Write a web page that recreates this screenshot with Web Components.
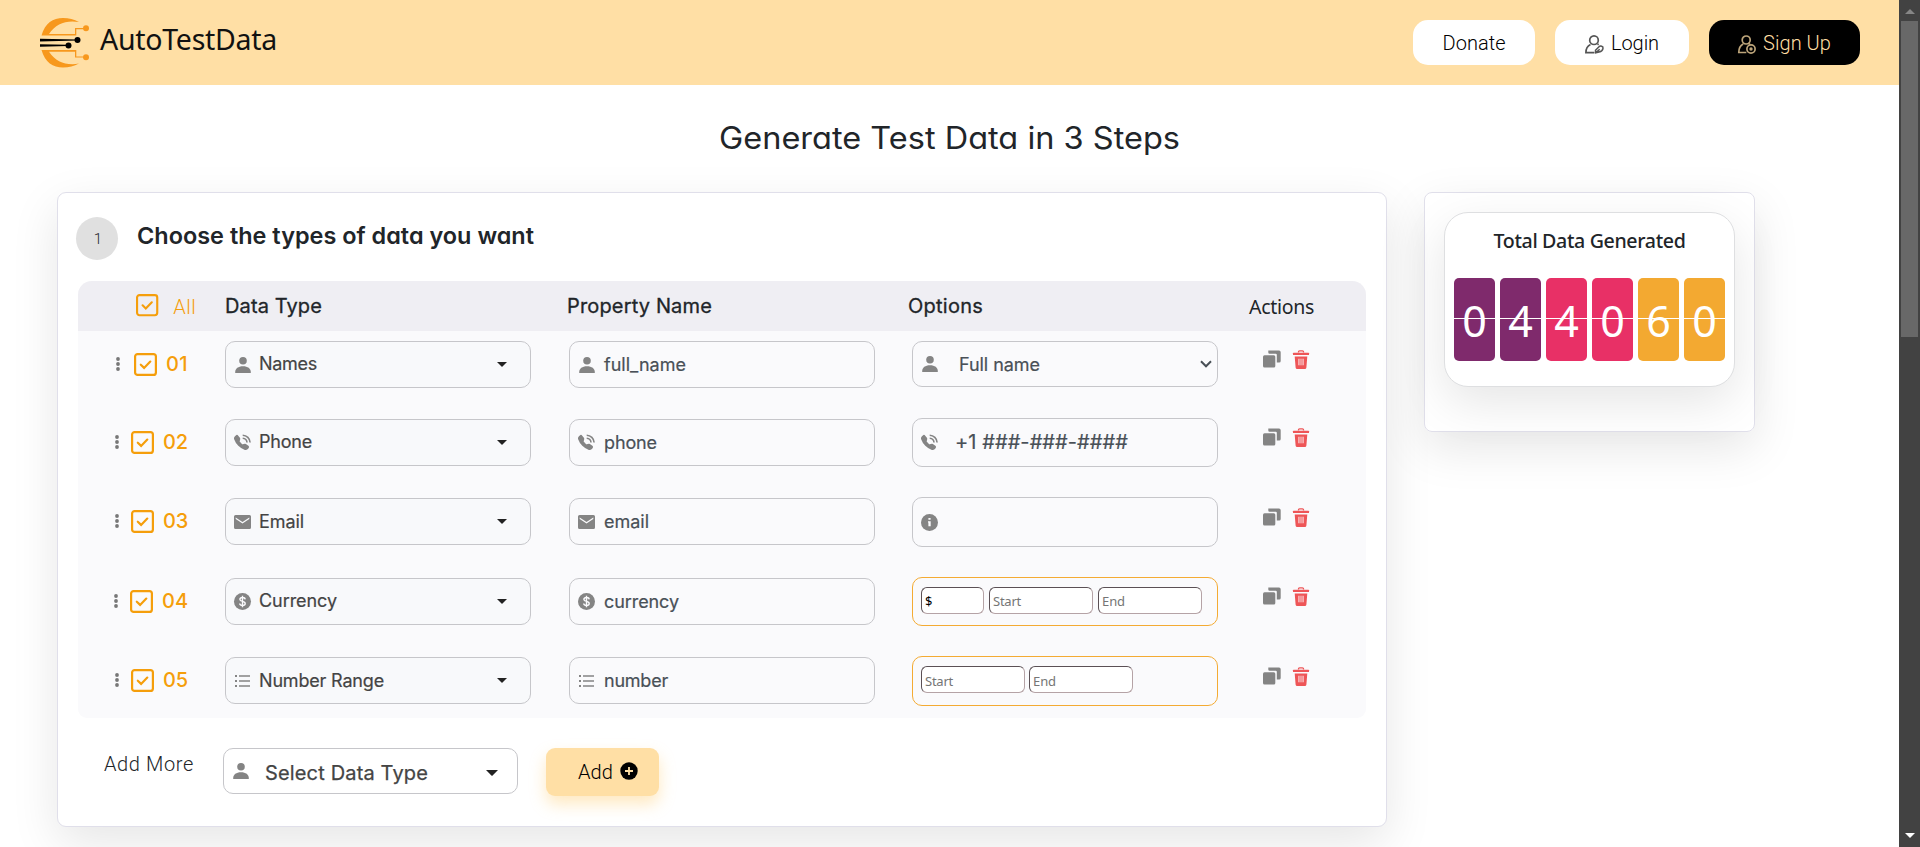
<!DOCTYPE html>
<html lang="en">
<head>
<meta charset="utf-8">
<title>AutoTestData</title>
<style>
html,body{margin:0;height:847px;overflow:hidden;background:#fff}
body{font-family:Inter,sans-serif;color:#212529}
</style>
</head>
<body>
<app-page></app-page>
<script>
const define = (name, html, setup) => customElements.define(name, class extends HTMLElement {
  connectedCallback() {
    if (this.shadowRoot) return;
    const root = this.attachShadow({mode: 'open'});
    const a = (k, d = '') => this.hasAttribute(k) ? this.getAttribute(k) : d;
    root.innerHTML = typeof html === 'function' ? html(a) : html;
    if (setup) setup.call(this, root, a);
  }
});

/* Icon set: [width, height, markup] */
const ICONS = {
  person: [16,16,'<circle cx="8" cy="3.8" r="3.8"/><path d="M.2 16v-1c0-3.4 3-5.700 7.800-5.700s7.800 2.300 7.800 5.700v1z"/>'],
  phone: [17,17,'<path transform="translate(0 1) scale(.94)" d="M1.885.511a1.745 1.745 0 0 1 2.61.163L6.29 2.98c.329.423.445.974.315 1.494l-.547 2.19a.68.68 0 0 0 .178.643l2.457 2.457a.68.68 0 0 0 .644.178l2.189-.547a1.75 1.75 0 0 1 1.494.315l2.306 1.794c.829.645.905 1.87.163 2.611l-1.034 1.034c-.74.74-1.846 1.065-2.877.702a18.6 18.6 0 0 1-7.01-4.42 18.6 18.6 0 0 1-4.42-7.009c-.362-1.03-.037-2.137.703-2.877z"/><path d="M8.7 4.2a4.6 4.6 0 0 1 4.3 4.3M8.7 1.2a7.6 7.6 0 0 1 7.4 7.3" fill="none" stroke="currentColor" stroke-width="1.6"/>'],
  mail: [17,14,'<path fill-rule="evenodd" d="M1.5 0h14Q17 0 17 1.5v11q0 1.500-1.500 1.500h-14Q0 14 0 12.500v-11Q0 0 1.500 0zM1.700 2.400v1.700L8.500 8.600l6.800-4.500V2.400L8.500 6.900z"/>'],
  dollar: [17,17,'<circle cx="8.5" cy="8.5" r="8.5"/><path d="M11.200 6.300C11 4.900 9.900 4.500 8.500 4.500S5.900 5.200 5.900 6.400c0 2.700 5.300 1.300 5.300 4.100 0 1.300-1.200 2-2.700 2s-2.600-.6-2.800-2M8.500 2.800v11.400" fill="none" stroke="#fafafc" stroke-width="1.400"/>'],
  list: [15,12,'<path d="M0 0h2v2H0zM4 .3h11v1.500H4zM0 5h2v2H0zM4 5.200h11v1.500H4zM0 10h2v2H0zM4 10.200h11v1.500H4z"/>'],
  info: [17,17,'<circle cx="8.5" cy="8.5" r="8.500"/><path d="M7.400 3.900h2.200v1.900H7.400zM7 7.200h2.700v5H7.400V8.500H7z" fill="#fafafc"/>'],
  copy: [18,18,'<rect y="5.300" width="12.300" height="12.200" rx="1.500"/><path d="M5.300 .5H16q1.700 0 1.700 1.700V11q0 1.600-1.600 1.600h-2.300V4.800q0-1-1-1H6.500q-1.200 0-1.200-1.200z"/>'],
  trash: [16,19,'<path d="M5.500 2.600V1.800q0-1 1-1h3q1 0 1 1v.8" fill="none" stroke="currentColor" stroke-width="1.300"/><rect y="2.700" width="16" height="2.400" rx=".5"/><path d="M1.700 6.500h12.600l-.9 11q-.1 1.500-1.600 1.500H4.200q-1.500 0-1.600-1.500z"/><path d="M5 8.800h6v6.400H5z" fill="#f7aeb0"/><path d="M7 8.800v6.400M9 8.800v6.400" stroke="#ee6a6d" stroke-width=".6"/>'],
  login: [19,19,'<g fill="none" stroke="currentColor" stroke-width="1.700"><circle cx="9" cy="5.200" r="4.300"/><path d="M5.500 9.500C2.300 11 .9 13.500.9 17.700h8.600M12.500 9l1.200.7"/><path d="M10.700 17.900l-.2-2.600 3.500-3.600c1.300-1.200 4.500-.7 4 1.700-.2 1.700-2.400 3.300-4 3.700zM10.700 17.900l4-3.700" stroke-width="1.500"/></g>'],
  signup: [18,19,'<g fill="none" stroke="currentColor" stroke-width="1.700"><circle cx="8.200" cy="5" r="4"/><path d="M5.200 9C2.200 10.500.8 13 .8 17.500h7.500M10.800 8.700l1.300.5"/><circle cx="13" cy="14" r="4.100"/></g><circle cx="13" cy="14" r="1.700"/>'],
  plus: [18,18,'<circle cx="9" cy="9" r="8.700"/><path d="M9 5v8M5 9h8" stroke="#ffdfa5" stroke-width="1.800"/>'],
  check: [23,23,'<rect x="1.100" y="1.100" width="20.800" height="20.800" rx="2.500" fill="none" stroke="currentColor" stroke-width="2.200"/><path d="M6.800 11.700l3.300 3.200 6.200-6.300" fill="none" stroke="currentColor" stroke-width="2.200" stroke-linecap="round"/>'],
  dots: [4,14,'<circle cx="2" cy="2" r="1.900"/><circle cx="2" cy="7" r="1.900"/><circle cx="2" cy="12" r="1.900"/>'],
  caret: [10,5,'<path d="M0 0h10L5.500 4.600q-.5.400-1 0z"/>'],
  chevron: [12,8,'<path d="M1 1.300l5 5 5-5" fill="none" stroke="currentColor" stroke-width="2"/>'],
  logo: [50,50,'<g fill="#f7981d"><path d="M1.500 17.500C5 5 13 0 23 0c6 0 11 1.500 16 4C26 2 16 5.500 9 15.900h26V10h8.500v1.200H36.300v6.300z"/><circle cx="46" cy="10.300" r="3"/><path d="M1.500 32.100C5 44.600 13 49.600 23 49.600c6 0 11-1.500 16-4C26 47.600 16 44.100 9 33.700h26v5.900h8.500v-1.200H36.300v-6.300z"/><circle cx="46" cy="39.300" r="3"/></g><path d="M0 20.800l38 .6v1.200l-38 .9zM0 26.200l28 .6v1.300l-28 .6z"/><circle cx="37.500" cy="22" r="3"/><circle cx="28.500" cy="27.500" r="3"/>']
};
define('ui-icon', a => {
  const [w, h, body] = ICONS[a('name')];
  const s = +a('scale', 1);
  return `<style>:host{display:block;flex:none}svg{display:block;overflow:visible}</style>
  <svg width="${w*s}" height="${h*s}" viewBox="0 0 ${w} ${h}" fill="currentColor">${body}</svg>`;
});

/* Single line of text that spans the given width, by tracking or, with "stretch", by scaling */
define('fit-text', '<style>:host{display:block;flex:none;white-space:nowrap}span{display:inline-block;transform-origin:0 50%}</style><span><slot></slot></span>',
  function (root, a) {
    const span = root.querySelector('span'), w = +a('w');
    const n = this.textContent.length;
    const natural = span.getBoundingClientRect().width;
    if (!w || !natural) return;
    if (this.hasAttribute('stretch')) span.style.transform = `scaleX(${w / natural})`;
    else span.style.letterSpacing = (w - natural) / n + 'px';
    this.style.width = w + 'px';
  });

define('pill-button', a => `<style>
  :host{display:flex;align-items:center;justify-content:center;height:45px;border-radius:15px;background:#fff;color:#000;
    font:300 20px/24px Roboto,sans-serif;gap:7px;box-sizing:border-box}
  :host([dark]){background:#000;color:#ffdfa5}
  ui-icon{color:#555;margin-top:3px}:host([dark]) ui-icon{color:#bda57a}
  fit-text{padding-top:1px}
  </style>${a('icon') ? `<ui-icon name="${a('icon')}"></ui-icon>` : ''}<fit-text w="${a('w')}">${a('label')}</fit-text>`);

define('site-header', `<style>
  :host{display:flex;height:85px;background:#ffdfa5;align-items:flex-start;justify-content:space-between;padding:0 39px 0 40px;box-sizing:border-box}
  .brand{display:flex;gap:10px;padding-top:18px;color:#000}
  .brand fit-text{font:400 28.5px/40px "Noto Sans",sans-serif;color:#111;margin-top:1px}
  nav{display:flex;gap:20px;padding-top:20px}
  </style>
  <div class="brand"><ui-icon name="logo"></ui-icon><fit-text w="177">AutoTestData</fit-text></div>
  <nav><pill-button style="width:122px" label="Donate" w="63"></pill-button>
  <pill-button style="width:134px" label="Login" icon="login" w="48"></pill-button>
  <pill-button dark style="width:151px" label="Sign Up" icon="signup" w="68"></pill-button></nav>`);

define('form-field', a => `<style>
  :host{display:flex;align-items:center;width:306px;height:47px;box-sizing:border-box;border:1px solid #c6c6ca;border-radius:10px;
    padding:0 9px 0 8px;color:#495057;font:400 18px/24px Inter,sans-serif;-webkit-text-stroke:.2px currentColor}
  :host([type=select]){background:#f8f9fb;color:#444}
  .ic{flex:none;width:17px;margin-right:${a('gap', '8')}px;display:grid;place-items:center;color:#848484}
  .end{margin-left:auto}
  </style><div class="ic"><ui-icon name="${a('icon')}"></ui-icon></div>
  ${a('label') ? `<fit-text w="${a('w')}" style="position:relative;top:${a('dy', '0')}px">${a('label')}</fit-text>` : ''}
  ${a('type') === 'select' ? '<ui-icon class="end" name="caret" style="margin-right:14px;color:#222;margin-bottom:1px"></ui-icon>' : ''}
  ${a('type') === 'native' ? '<ui-icon class="end" name="chevron" style="margin-right:-4px"></ui-icon>' : ''}`);

define('range-box', `<style>
  :host{display:flex;width:306px;box-sizing:border-box;border:1px solid #f4ab33;border-radius:10px;padding:9px 8px;gap:5px}
  </style><slot></slot>`);
define('mini-input', a => `<style>
  :host{display:block;box-sizing:border-box;width:104px;height:27px;background:#fff;border:1px solid;border-color:#5b5055 #b5a3a6 #b5a3a6 #5b5055;
    border-radius:6px;padding-left:3px;color:#757575;font:400 13px/${a('lh', '26')}px "Noto Sans",sans-serif}
  </style><fit-text w="${a('w')}">${a('label')}</fit-text>`);

define('data-row', a => `<style>
  :host{display:grid;grid-template-columns:147px 344px 343px 351px auto;align-items:start;padding-top:10px;box-sizing:border-box}
  .lead{display:flex;height:46px;width:110px;align-items:center;justify-content:flex-end;color:#f59e0b;font:500 20px/24px Inter,sans-serif}
  .lead .d{color:#777;margin-right:${a('dotgap', '12')}px}
  .opt{margin-top:${a('oy', '-1')}px}
  .act{display:flex;gap:12px;padding-top:${a('ay', '9')}px;color:#848484}
  .act .t{color:#ee5557}
  </style>
  <div class="lead"><ui-icon class="d" name="dots"></ui-icon><ui-icon name="check" style="margin-right:${a('numgap', '9')}px"></ui-icon><fit-text w="${a('nw', '26')}">${a('no')}</fit-text></div>
  <form-field type="select" icon="${a('icon')}" label="${a('label')}" w="${a('w')}" dy="${a('dy', '-1')}"></form-field>
  <form-field icon="${a('icon')}" gap="9" label="${a('prop')}" w="${a('pw')}"></form-field>
  <div class="opt"><slot></slot></div>
  <div class="act"><ui-icon name="copy"></ui-icon><ui-icon class="t" name="trash"></ui-icon></div>`);

define('data-table', `<style>
  :host{display:block;width:1288px;background:#fafafc;border-radius:14px 14px 9px 9px;overflow:hidden;height:437px}
  header{display:grid;grid-template-columns:147px 342px 341px 341px auto;height:50px;background:#efeef3;align-items:center;font:400 20px/24px Inter,sans-serif}
  header>fit-text{-webkit-text-stroke:.3px currentColor}
  .all{display:flex;padding-left:58px;align-items:center;color:#f59e0b;font:300 20px/24px Roboto,sans-serif;white-space:nowrap;width:89px}
  .all fit-text{margin-left:15px;padding-top:1px}
  header>.act{font:400 19.500px/24px "Noto Sans",sans-serif;padding-top:2px;-webkit-text-stroke:0}
  </style>
  <header><div class="all"><ui-icon name="check" scale=".97" style="margin-top:-1px"></ui-icon><fit-text w="23">All</fit-text></div>
  <fit-text w="97">Data Type</fit-text><fit-text w="145">Property Name</fit-text><fit-text w="75">Options</fit-text>
  <fit-text class="act" w="65">Actions</fit-text></header>
  <data-row style="height:78px" no="01" nw="22" icon="person" label="Names" w="58" prop="full_name" pw="82" oy="0" dotgap="14">
    <form-field type="native" icon="person" gap="21" dy="1" label="Full name" w="81" style="height:46px"></form-field></data-row>
  <data-row style="height:79px" no="02" nw="25" icon="phone" label="Phone" w="53" prop="phone" pw="53">
    <form-field icon="phone" gap="17" label="+1 ###-###-####" w="173" dy="-1" style="height:49px;font-size:20px"></form-field></data-row>
  <data-row style="height:80px" no="03" nw="25" icon="mail" label="Email" w="45" prop="email" pw="45" dy="0" ay="10">
    <form-field icon="info" style="height:50px"></form-field></data-row>
  <data-row style="height:79px" no="04" nw="26" icon="dollar" label="Currency" w="78" prop="currency" pw="75">
    <range-box style="height:49px"><mini-input style="width:63px;color:#000" label="$" w="7"></mini-input>
    <mini-input label="Start" w="28"></mini-input><mini-input label="End" w="23"></mini-input></range-box></data-row>
  <data-row style="height:71px" no="05" nw="25" icon="list" label="Number Range" w="125" prop="number" pw="64" dy="0" ay="10">
    <range-box style="height:50px;gap:4px"><mini-input label="Start" w="28" lh="28"></mini-input><mini-input label="End" w="23" lh="28"></mini-input></range-box></data-row>`);

define('step-card', `<style>
  :host{display:block;width:1330px;height:635px;box-sizing:border-box;border:1px solid #e0dfea;border-radius:9px;background:#fff;
    box-shadow:0 16px 48px rgba(0,0,0,.1);padding:24px 17px 0 18px}
  .head{display:flex;gap:19px;height:64px}
  .no{width:42px;height:43px;border-radius:50%;background:#e0e0e0;display:grid;place-items:center;font:300 15px/20px Roboto,sans-serif;padding-left:2px;box-sizing:border-box}
  h2{margin:3px 0 0;font:600 23.500px/32px Inter,sans-serif;font-feature-settings:"cv11"}
  data-table{margin-left:2px}
  .add{display:flex;padding:30px 0 0 28px;align-items:flex-start;font:300 20px/24px Roboto,sans-serif}
  .btn{display:flex;align-items:center;width:113px;height:48px;box-sizing:border-box;margin-left:28px;padding-left:32px;gap:7px;border-radius:9px;background:#ffdfa5;color:#000;box-shadow:0 8px 16px rgba(255,200,100,.4)}
  .sel{display:flex;align-items:center;width:295px;height:46px;box-sizing:border-box;margin-left:29px;border:1px solid #c6c6ca;border-radius:10px;padding:0 19px 0 9px;color:#444;font:400 20px/24px Inter,sans-serif;-webkit-text-stroke:.25px currentColor}
  </style>
  <div class="head"><div class="no">1</div><h2><fit-text stretch w="397">Choose the types of data you want</fit-text></h2></div>
  <data-table></data-table>
  <div class="add"><fit-text w="90" style="margin-top:4px">Add More</fit-text>
  <div class="sel"><ui-icon name="person" style="color:#848484"></ui-icon><fit-text w="163" style="margin:3px 0 0 16px">Select Data Type</fit-text><ui-icon name="caret" scale="1.200" style="margin:4px 0 0 auto;color:#222"></ui-icon></div>
  <div class="btn"><fit-text w="35">Add</fit-text><ui-icon name="plus" style="margin-top:-3px"></ui-icon></div></div>`);

define('flip-digit', `<style>
  :host{display:flex;justify-content:center;width:41px;height:83px;border-radius:5px;color:#fff;position:relative;
    font:400 43px/83px "Noto Sans",sans-serif;box-sizing:border-box;padding-top:1px}
  i{position:absolute;left:0;right:0;top:40px;height:1px;background:#fff}
  </style><slot></slot><i></i>`);

define('counter-card', `<style>
  :host{display:block;width:331px;height:240px;box-sizing:border-box;border:1px solid #e0dfea;border-radius:8px;padding:19px;
    box-shadow:0 16px 48px rgba(0,0,0,.1)}
  .in{width:291px;height:175px;box-sizing:border-box;border:1px solid #dedfe1;border-radius:24px;background:#fff;box-shadow:0 16px 48px rgba(0,0,0,.1);
    padding:14px 9px 0;display:flex;flex-direction:column;align-items:center}
  fit-text{font:500 19.600px/28px "Noto Sans",sans-serif}
  .digits{display:flex;gap:5px;margin-top:23px}
  </style><div class="in"><fit-text w="192">Total Data Generated</fit-text>
  <div class="digits">
  <flip-digit style="background:#7f2a6c">0</flip-digit><flip-digit style="background:#7f2a6c">4</flip-digit>
  <flip-digit style="background:#e83066">4</flip-digit><flip-digit style="background:#e83066">0</flip-digit>
  <flip-digit style="background:#f3a931">6</flip-digit><flip-digit style="background:#f3a931">0</flip-digit></div></div>`);

define('scroll-bar', `<style>
  :host{display:flex;flex-direction:column;align-items:center;width:21px;height:847px;background:#424242;flex:none}
  .t{width:17px;height:316px;background:#686868;margin-top:7px}
  .a{width:0;height:0;border:5px solid transparent}
  .u{border-bottom-color:#868686;border-top:0;margin-top:9px}
  .d{border-top-color:#fff;border-bottom:0;margin:auto 0 9px}
  </style><div class="a u"></div><div class="t"></div><div class="a d"></div>`);

define('app-page', `<style>
  :host{display:flex;height:847px;overflow:hidden}
  main{width:1899px;flex:none;height:847px;overflow:hidden}
  h1{margin:32px 0 0;height:75px;display:flex;justify-content:center;font:400 30.500px/42px Inter,sans-serif;font-feature-settings:"cv11"}
  .cols{display:flex;gap:37px;padding-left:57px;align-items:flex-start}
  </style>
  <main><site-header></site-header><h1><fit-text stretch w="461">Generate Test Data in 3 Steps</fit-text></h1>
  <div class="cols"><step-card></step-card><counter-card></counter-card></div></main><scroll-bar></scroll-bar>`);
</script>
</body>
</html>
